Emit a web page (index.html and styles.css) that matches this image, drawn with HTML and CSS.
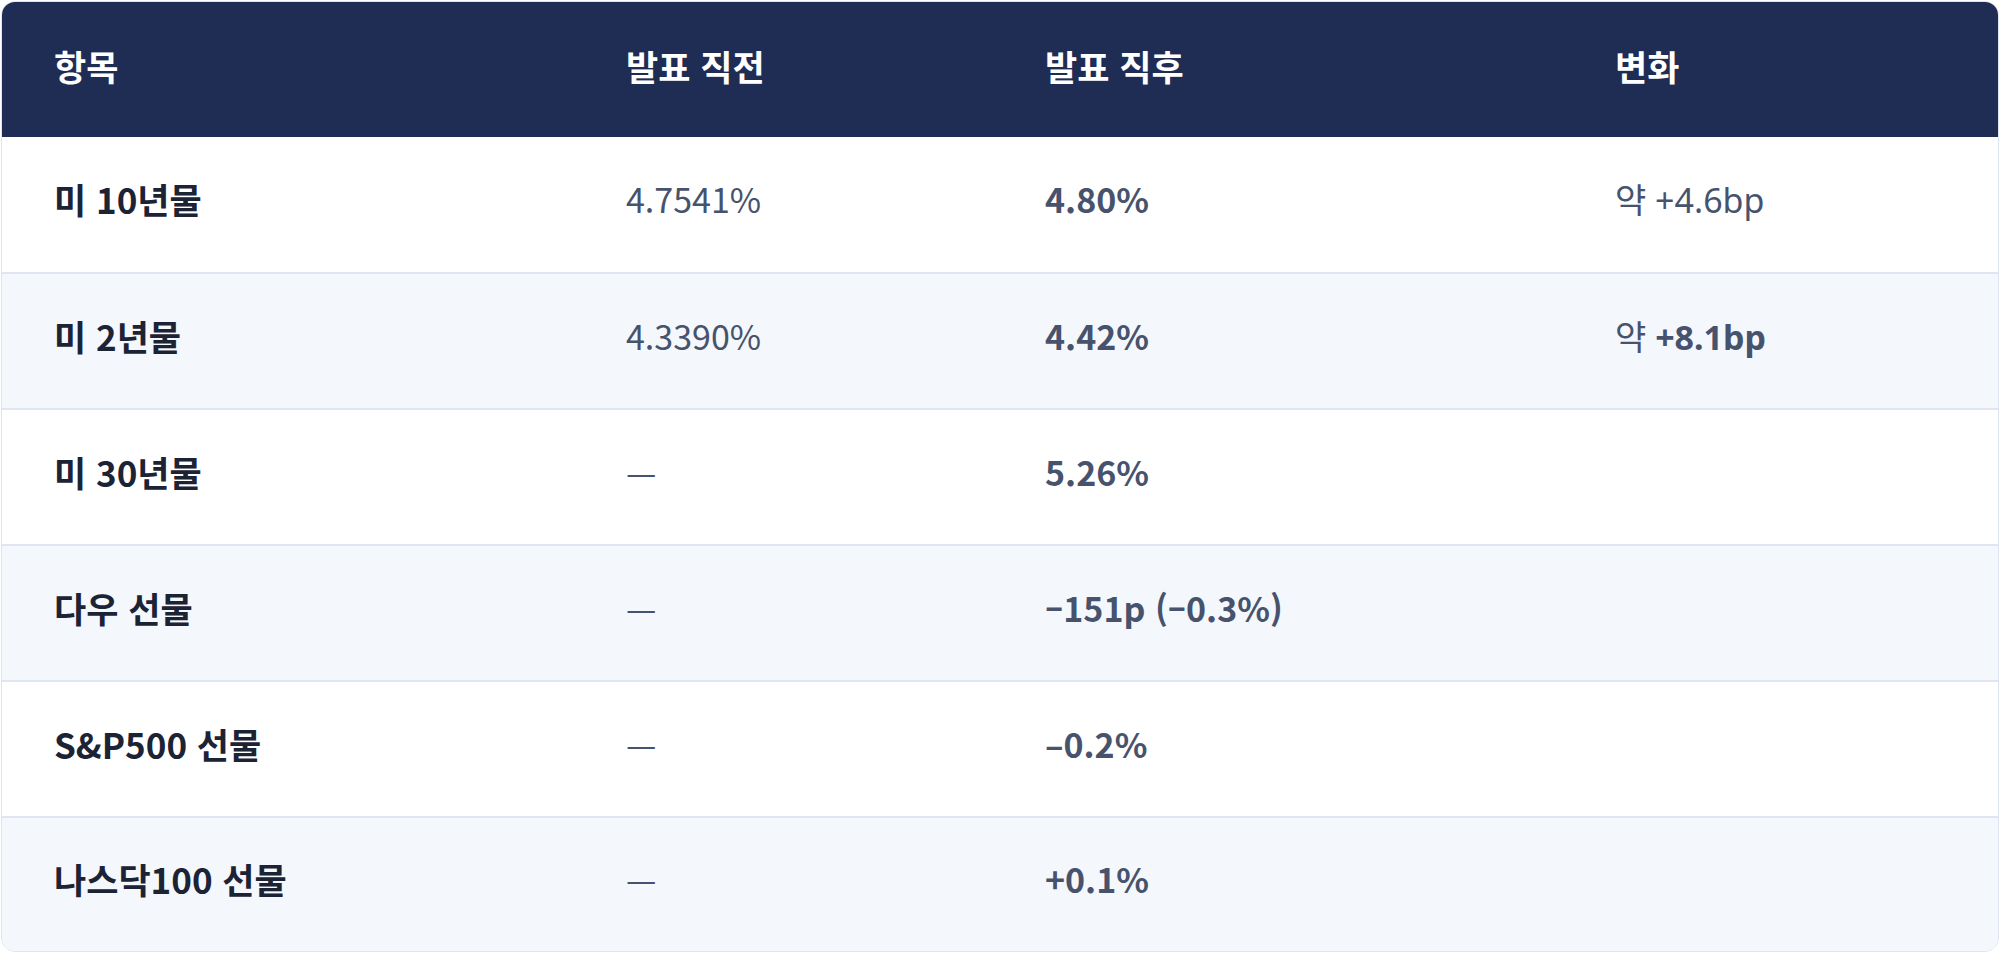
FILE: index.html
```html
<!DOCTYPE html>
<html lang="ko">
<head>
<meta charset="utf-8">
<title>시장 반응</title>
<link rel="stylesheet" href="styles.css">
</head>
<body>
<div class="wrap">
  <table class="tbl">
    <colgroup>
      <col class="c1"><col class="c2"><col class="c3"><col class="c4">
    </colgroup>
    <thead>
      <tr><th>항목</th><th>발표 직전</th><th>발표 직후</th><th>변화</th></tr>
    </thead>
    <tbody>
      <tr><td class="name">미 10년물</td><td class="pre">4.7541%</td><td class="post">4.80%</td><td class="chg">약 +4.6bp</td></tr>
      <tr><td class="name">미 2년물</td><td class="pre">4.3390%</td><td class="post">4.42%</td><td class="chg">약 <b>+8.1bp</b></td></tr>
      <tr><td class="name">미 30년물</td><td class="pre">—</td><td class="post">5.26%</td><td class="chg"></td></tr>
      <tr><td class="name">다우 선물</td><td class="pre">—</td><td class="post">–151p (–0.3%)</td><td class="chg"></td></tr>
      <tr><td class="name">S&amp;P500 선물</td><td class="pre">—</td><td class="post">–0.2%</td><td class="chg"></td></tr>
      <tr><td class="name">나스닥100 선물</td><td class="pre">—</td><td class="post">+0.1%</td><td class="chg"></td></tr>
    </tbody>
  </table>
</div>
</body>
</html>
```

FILE: styles.css
```css
html, body {
  margin: 0;
  padding: 0;
  background: #ffffff;
}
body {
  padding: 1px;
  font-family: "Noto Sans CJK KR", "Noto Sans", sans-serif;
}
.wrap {
  border: 1px solid #dfe5f0;
  border-radius: 14px;
  overflow: hidden;
}
.tbl {
  width: 100%;
  border-collapse: collapse;
  table-layout: fixed;
}
.c1 { width: 572px; }
.c2 { width: 419px; }
.c3 { width: 570px; }
.c4 { width: auto; }
.tbl th {
  background: #1f2c53;
  color: #ffffff;
  font-weight: 700;
  font-size: 35px;
  text-align: left;
  height: 135px;
  padding: 0 0 8px 52px;
  box-sizing: border-box;
}
.tbl td {
  height: 136px;
  box-sizing: border-box;
  padding: 0 0 12px 52px;
  font-size: 34px;
  border-bottom: 2px solid #dfe6f1;
  color: #47536d;
}
.tbl tbody tr:last-child td { border-bottom: 0; height: 134px; }
.tbl tbody tr:nth-child(even) td { background: #f4f7fc; }
.tbl td.name {
  color: #1b2335;
  font-weight: 700;
  font-size: 35px;
}
.tbl td.pre { font-weight: 400; }
.tbl td.post { font-weight: 700; }
.tbl td.chg {
  font-family: "Noto Sans", "Noto Sans CJK KR", sans-serif;
  font-weight: 400;
}
.tbl td.chg b { font-weight: 700; }
```
